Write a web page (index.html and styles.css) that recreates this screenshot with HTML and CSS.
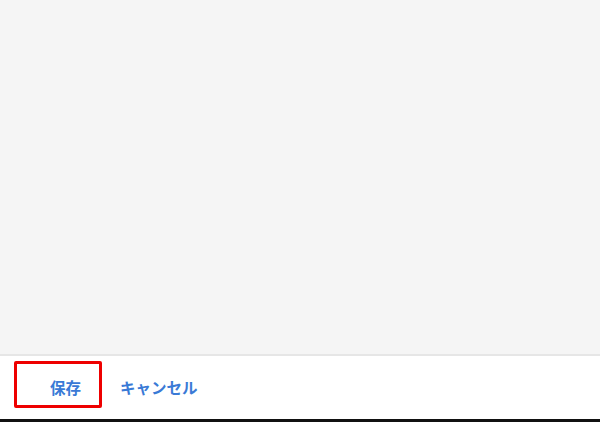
FILE: index.html
```html
<!DOCTYPE html>
<html lang="ja">
<head>
<meta charset="utf-8">
<link rel="stylesheet" href="styles.css">
</head>
<body>
<div class="page">
  <main class="content"></main>
  <footer class="footer">
    <button class="btn btn-highlight">保存</button>
    <button class="btn">キャンセル</button>
  </footer>
  <div class="edge"></div>
</div>
</body>
</html>
```

FILE: styles.css
```css
html, body {
  margin: 0;
  padding: 0;
  width: 600px;
  height: 422px;
  overflow: hidden;
  background: #ffffff;
}
.page {
  display: flex;
  flex-direction: column;
  height: 422px;
}
.content {
  height: 354px;
  background: #f5f5f5;
  border-bottom: 2px solid #e6e6e6;
  flex: none;
}
.footer {
  flex: 1;
  display: flex;
  align-items: flex-start;
  padding: 5px 0 0 14px;
  background: #fff;
}
.btn {
  font-family: "Noto Sans CJK JP", "Noto Sans", sans-serif;
  font-size: 15.5px;
  font-weight: 700;
  color: #3a7ad6;
  background: none;
  border: none;
  box-sizing: border-box;
  padding: 6px 0 0 0;
  height: 47px;
  line-height: 41px;
  cursor: pointer;
}
.btn-highlight {
  width: 88px;
  border: 3px solid #ee0000;
  border-radius: 2px;
  padding-left: 33px;
  text-align: left;
  line-height: 35px;
  margin-right: 18px;
}
.edge {
  height: 3px;
  background: #111;
  flex: none;
}
```
